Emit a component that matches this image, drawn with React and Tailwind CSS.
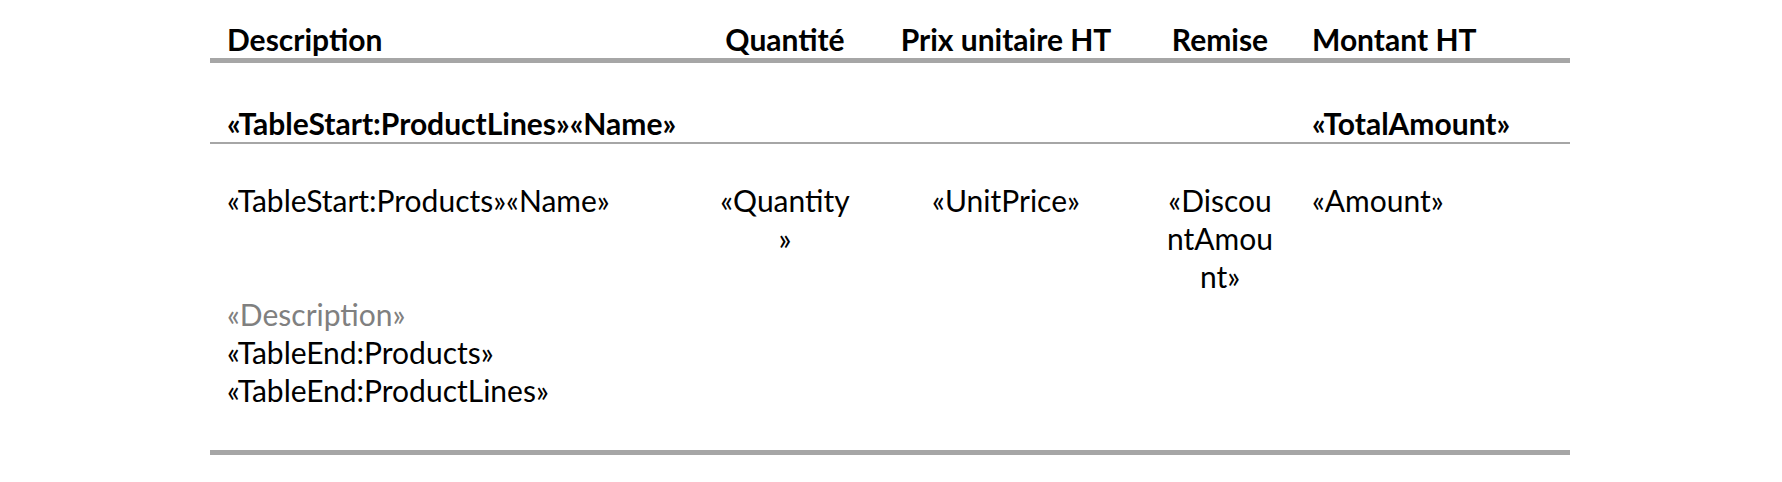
import React from "react";

const cell = "px-[17px] whitespace-nowrap";

const App = () => {
  return (
    <div className="min-h-[482px] w-full bg-white font-['Lato',sans-serif] text-[30px] leading-[38px] text-black">
      <div className="ml-[210px] w-[1360px] pt-[21px]">
        {/* header */}
        <div className="grid grid-cols-[493px_164px_278px_150px_275px] border-b-[5px] border-[#a6a6a6] font-bold">
          <div className={`${cell} leading-[37px]`}>Description</div>
          <div className={`${cell} text-center leading-[37px]`}>Quantité</div>
          <div className={`${cell} text-center leading-[37px]`}>Prix unitaire HT</div>
          <div className={`${cell} text-center leading-[37px]`}>Remise</div>
          <div className={`${cell} leading-[37px]`}>Montant HT</div>
        </div>

        {/* product line group */}
        <div className="grid grid-cols-[493px_164px_278px_150px_275px] border-b-2 border-[#a6a6a6] pt-[42px] font-bold">
          <div className={`${cell} leading-[37px]`}>«TableStart:ProductLines»«Name»</div>
          <div />
          <div />
          <div />
          <div className={`${cell} leading-[37px]`}>«TotalAmount»</div>
        </div>

        {/* products */}
        <div className="border-b-[5px] border-[#a6a6a6] pt-[37px] pb-[41px]">
          <div className="grid grid-cols-[493px_164px_278px_150px_275px]">
            <div className={cell}>«TableStart:Products»«Name»</div>
            <div className={`${cell} text-center`}>
              «Quantity
              <br />»
            </div>
            <div className={`${cell} text-center`}>«UnitPrice»</div>
            <div className={`${cell} text-center`}>
              «Discou
              <br />
              ntAmou
              <br />
              nt»
            </div>
            <div className={cell}>«Amount»</div>
          </div>
          <div className={`${cell} flex flex-col`}>
            <span className="text-[#808080]">«Description»</span>
            <span>«TableEnd:Products»</span>
            <span>«TableEnd:ProductLines»</span>
          </div>
        </div>
      </div>
    </div>
  );
};

export default App;
